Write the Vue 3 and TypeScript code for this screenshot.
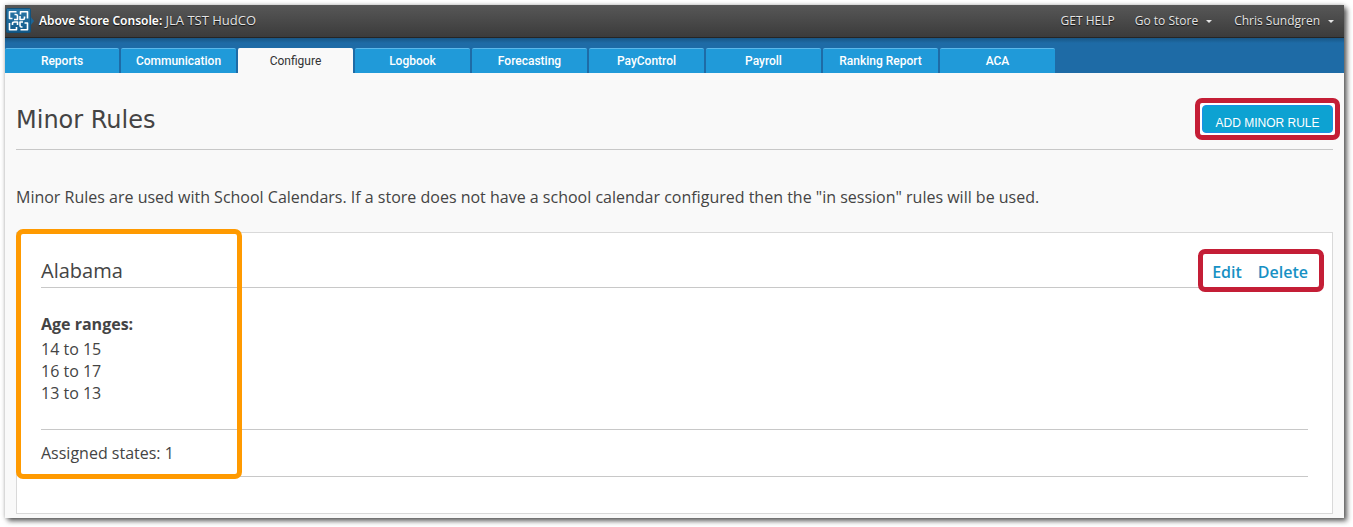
<script setup lang="ts">
import { ref } from 'vue'

interface MinorRule {
  name: string
  ages: string[]
  states: number
}

const tabs: string[] = [
  'Reports',
  'Communication',
  'Configure',
  'Logbook',
  'Forecasting',
  'PayControl',
  'Payroll',
  'Ranking Report',
  'ACA',
]
const active = ref('Configure')

const rules: MinorRule[] = [
  { name: 'Alabama', ages: ['14 to 15', '16 to 17', '13 to 13'], states: 1 },
]
</script>

<template>
  <div class="window">
    <header class="topbar">
      <svg class="logo" viewBox="0 0 28 26" aria-hidden="true">
        <defs>
          <linearGradient id="logoFill" x1="0" y1="0" x2="0" y2="1">
            <stop offset="0" stop-color="#2a78a8" />
            <stop offset="1" stop-color="#125a8a" />
          </linearGradient>
        </defs>
        <path d="M24.500 8.500 L28 13 L24.500 17.500 Z" fill="#1b6596" />
        <rect x="0.500" y="0.500" width="24" height="24" rx="1" fill="url(#logoFill)" stroke="#11527d" />
        <g fill="none" stroke="#fff" stroke-width="1.600" stroke-linejoin="round">
          <path d="M10.500 3.800 H3.500 V10.500 H6.500 M8.500 6.500 H10 Q11.500 6.500 11.500 8.500 V11.500 H8" />
          <path d="M21.500 10.500 V3.800 H14.500 V6.500 M18.500 8.500 V10 Q18.500 11.500 17 11.500 H14 V8" />
          <path d="M14.500 21.800 H21.500 V15 H18.500 M16.500 19 H15.500 Q14 19 14 17 V14 H17" />
          <path d="M3.500 15 V21.800 H10.500 V19 M6.500 17 V15.500 Q6.500 14 8.500 14 H11.500 V17" />
        </g>
      </svg>
      <p class="console"><strong>Above Store Console:</strong> JLA TST HudCO</p>
      <a class="top-link help" href="#help">GET HELP</a>
      <button class="top-link store" type="button">Go to Store<span class="caret"></span></button>
      <button class="top-link" type="button">Chris Sundgren<span class="caret"></span></button>
    </header>

    <nav class="tabs" aria-label="Main">
      <a
        v-for="tab in tabs"
        :key="tab"
        href="#"
        class="tab"
        :class="{ active: tab === active }"
        @click.prevent="active = tab"
        >{{ tab }}</a
      >
    </nav>

    <main class="content">
      <div class="title-row">
        <h1>Minor Rules</h1>
        <div class="add-frame">
          <button class="add" type="button">ADD MINOR RULE</button>
        </div>
      </div>

      <p class="intro">
        Minor Rules are used with School Calendars. If a store does not have a school calendar
        configured then the "in session" rules will be used.
      </p>

      <section v-for="rule in rules" :key="rule.name" class="card">
        <div class="card-head">
          <h2>{{ rule.name }}</h2>
          <div class="actions">
            <a href="#edit">Edit</a>
            <a href="#delete">Delete</a>
          </div>
        </div>
        <div class="ages">
          <h3>Age ranges:</h3>
          <ul>
            <li v-for="age in rule.ages" :key="age">{{ age }}</li>
          </ul>
        </div>
        <p class="states">Assigned states: {{ rule.states }}</p>
        <div class="highlight"></div>
      </section>
    </main>
  </div>
</template>

<style>
body {
  background: #fff;
}
</style>

<style scoped>
* {
  box-sizing: border-box;
}
h1,
h2,
h3,
p,
ul {
  margin: 0;
  padding: 0;
  font-weight: 400;
}
a {
  text-decoration: none;
}
.window {
  margin: 5px 9px 9px 5px;
  background: #f9f9f9;
  box-shadow:
    0 0 4px rgba(0, 0, 0, 0.25),
    3px 3px 5px rgba(0, 0, 0, 0.6);
  font-family: 'Open Sans', 'Noto Sans', sans-serif;
  color: #444;
}
.topbar {
  display: flex;
  align-items: center;
  height: 33px;
  padding: 0 10px 0 1px;
  background: linear-gradient(#575757, #3b3b3b);
  border-bottom: 1px solid #252525;
  font-size: 12px;
  line-height: 16px;
  color: #e4e4e4;
  text-shadow: 0 1px 1px #111;
}
.logo {
  width: 28px;
  height: 26px;
  margin-right: 5px;
}
.console {
  flex: 1;
  padding-bottom: 2px;
  font-size: 13px;
}
.console strong {
  font: 600 12px/16px 'Noto Sans', 'Open Sans', sans-serif;
  color: #fff;
}
.top-link {
  display: flex;
  align-items: center;
  padding: 0;
  border: 0;
  background: none;
  font: inherit;
  color: inherit;
  text-shadow: inherit;
}
.help {
  margin-right: 20px;
}
.store {
  margin-right: 22px;
}
.caret {
  margin-left: 8px;
  border: 3px solid transparent;
  border-top-color: #e4e4e4;
  border-bottom-width: 0;
}
.tabs {
  display: flex;
  align-items: flex-end;
  gap: 2px;
  height: 35px;
  background: linear-gradient(#185685, #1e6ba6 5px);
}
.tab {
  flex: 0 1 115px;
  height: 25px;
  border-top: 1px solid #5cb8ea;
  border-radius: 2px 2px 0 0;
  background: #209ad9;
  color: #fff;
  font: 500 12px/24px Roboto, 'Open Sans', sans-serif;
  text-align: center;
  white-space: nowrap;
}
.tab:first-child {
  flex-basis: 114px;
}
.tab.active {
  border-color: #f9f9f9;
  background: #f9f9f9;
  color: #333;
  font-weight: 400;
}
.content {
  padding: 25px 11px 4px;
}
.title-row {
  position: relative;
  display: flex;
  align-items: flex-start;
  justify-content: space-between;
  height: 52px;
  border-bottom: 1px solid #c8c8c8;
}
h1 {
  padding-top: 6px;
  font: 400 24px/32px 'DejaVu Sans', sans-serif;
}
.add-frame {
  margin-right: -7px;
  padding: 2px;
  border: 5px solid #c41e36;
  border-radius: 7px;
  background: #fff;
}
.add {
  display: block;
  width: 131px;
  height: 28px;
  padding: 7px 0 0;
  border: 1px solid #1c8fe8;
  border-radius: 4px;
  background: #0da2d2;
  color: #fff;
  font: 12px/16px 'Liberation Sans', Arial, sans-serif;
}
.intro {
  padding: 36px 0 24px;
  font-size: 16px;
  line-height: 22px;
}
.card {
  position: relative;
  padding: 16px 24px 36px;
  border: 1px solid #d9d9d9;
  background: #fff;
}
.card-head {
  display: flex;
  align-items: flex-start;
  justify-content: space-between;
  height: 39px;
  border-bottom: 1px solid #c8c8c8;
}
h2 {
  padding-top: 8px;
  font-size: 20px;
  line-height: 28px;
}
.actions {
  position: relative;
  display: flex;
  gap: 16px;
  margin-right: -16px;
  padding: 7px 11px 4px 9px;
  border: 5px solid #c41e36;
  border-radius: 7px;
  background: #fff;
}
.actions a {
  color: #1791c4;
  font: 600 16px/22px 'Open Sans', 'Noto Sans', sans-serif;
}
.ages {
  padding: 25px 0;
  border-bottom: 1px solid #c8c8c8;
  font-size: 16px;
  line-height: 22px;
}
h3 {
  margin-bottom: 3px;
  font-size: 16px;
  font-weight: 700;
}
ul {
  list-style: none;
}
.states {
  padding: 12px 0;
  border-bottom: 1px solid #c8c8c8;
  font-size: 16px;
  line-height: 22px;
}
.highlight {
  position: absolute;
  top: -4px;
  left: -1px;
  width: 226px;
  height: 250px;
  border: 5px solid #ff9a00;
  border-radius: 7px;
  pointer-events: none;
}
</style>
